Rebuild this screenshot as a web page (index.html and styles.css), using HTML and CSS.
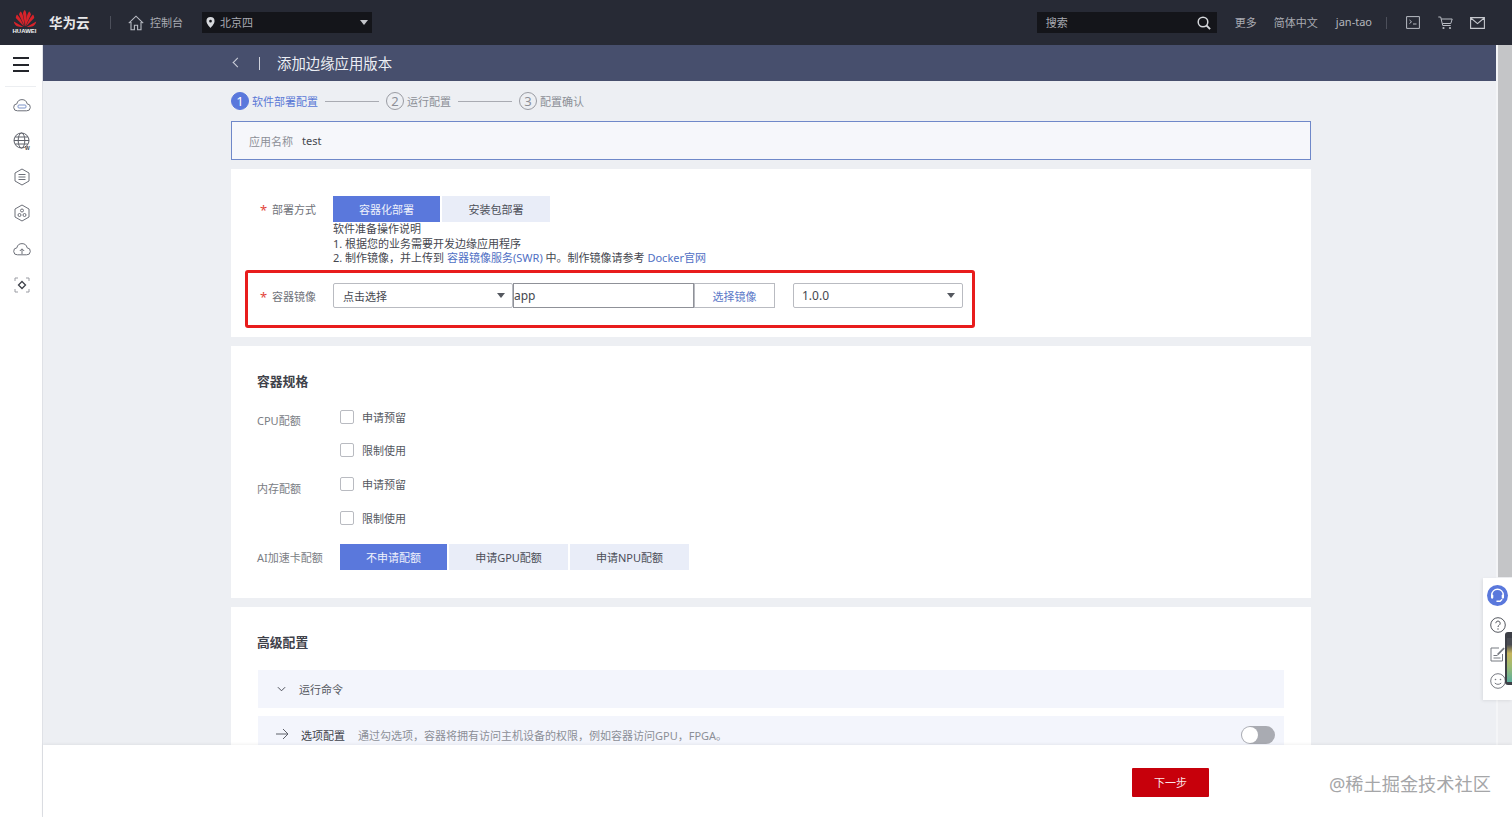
FILE: index.html
```html
<!DOCTYPE html>
<html lang="zh-CN">
<head>
<meta charset="utf-8">
<title>添加边缘应用版本</title>
<link rel="stylesheet" href="styles.css">
</head>
<body>
<header class="topbar">
  <div class="logo">
    <svg class="logo-mark" viewBox="0 0 24 17" width="24" height="17">
      <g fill="#d8232a">
        <path d="M12 16.5 9.6 3.6C9.8 1.8 10.8.6 11.4 0c.9 1.2 2.9 4 .6 16.5Z" transform="translate(.4)"/>
        <path d="M11.6 16.5 6 4.6c.2-1.4 1-2.6 1.8-3.2 1 1 3 4 3.8 15.1Z"/>
        <path d="M12.4 16.5 18 4.6c-.2-1.4-1-2.6-1.8-3.2-1 1-3 4-3.8 15.1Z"/>
        <path d="M11 16.6 2.8 8c0-1.6.5-2.9 1.2-3.6 1.6 1.6 4.6 5.6 7 12.2Z"/>
        <path d="M13 16.6 21.2 8c0-1.6-.5-2.9-1.2-3.6-1.6 1.6-4.6 5.6-7 12.2Z"/>
        <path d="M10.4 17 .8 11.6c.2 2 1.6 4 3.4 4.6 2 .7 4.4.9 6.2.8Z"/>
        <path d="M13.6 17l9.6-5.4c-.2 2-1.6 4-3.4 4.6-2 .7-4.4.9-6.2.8Z"/>
      </g>
    </svg>
    <span class="logo-word">HUAWEI</span>
  </div>
  <span class="brand">华为云</span>
  <span class="bar-sep"></span>
  <svg class="home-icon" viewBox="0 0 16 16" width="16" height="16"><path d="M.8 8.2 8 1.2l7.2 7M3 7v7.8h3.4v-4.6h3.2v4.6H13V7" fill="none" stroke="#b9bcc4" stroke-width="1.1"/></svg>
  <span class="nav-text console">控制台</span>
  <div class="region">
    <svg viewBox="0 0 10 12" width="9" height="11"><path fill-rule="evenodd" d="M5 0a4.5 4.5 0 0 1 4.5 4.5C9.500 7.500 5 12 5 12S.5 7.500.5 4.500A4.500 4.500 0 0 1 5 0Zm0 3a1.500 1.500 0 1 0 0 3 1.500 1.500 0 0 0 0-3Z" fill="#d5d7db"/></svg>
    <span class="region-name">北京四</span>
    <span class="caret caret-light"></span>
  </div>
  <div class="bar-right">
    <div class="search">
      <span>搜索</span>
      <svg viewBox="0 0 14 14" width="14" height="14"><circle cx="6" cy="6" r="4.800" fill="none" stroke="#d5d7db" stroke-width="1.500"/><path d="m9.500 9.500 3.600 3.600" stroke="#d5d7db" stroke-width="1.800"/></svg>
    </div>
    <span class="nav-text more">更多</span>
    <span class="nav-text lang">简体中文</span>
    <span class="nav-text user">jan-tao</span>
    <span class="bar-sep thin"></span>
    <svg class="bar-icon first" viewBox="0 0 14 13" width="14" height="13"><path d="M.6.6h12.800v11.800H.6z" fill="none" stroke="#b9bcc4"/><path d="m3.500 4 2 1.800-2 1.800M7 8h3.500" fill="none" stroke="#b9bcc4"/></svg>
    <svg class="bar-icon cart" viewBox="0 0 15 14" width="15" height="14"><path d="M.3 1h2.400l2 8.500h8M3.200 3h11l-1.400 4.500H4.400" fill="none" stroke="#b9bcc4"/><circle cx="5.500" cy="12" r="1.100" fill="#b9bcc4"/><circle cx="12" cy="12" r="1.100" fill="#b9bcc4"/></svg>
    <svg class="bar-icon mail" viewBox="0 0 15 12" width="15" height="12"><path d="M.6.6h13.800v10.800H.6zM.8 1l6.700 5.600L14.200 1" fill="none" stroke="#c6c8ce" stroke-width="1.100"/></svg>
  </div>
</header>

<div class="shell">
  <aside class="sidebar">
    <div class="hamburger"><i></i><i></i><i></i></div>
    <div class="side-rule"></div>
    <svg class="side-icon" viewBox="0 0 18 14" width="18" height="14"><path d="M4.500 12.800h9a3.500 3.500 0 0 0 .6-7 5.200 5.200 0 0 0-10.200 0 3.500 3.500 0 0 0 .6 7Z" fill="none" stroke="#6d7079"/><rect x="5" y="7" width="8" height="3" rx="1" fill="none" stroke="#7d93c9"/></svg>
    <svg class="side-icon" viewBox="0 0 18 18" width="18" height="18"><g fill="none" stroke="#5d6069"><circle cx="8.500" cy="8.500" r="7.500"/><ellipse cx="8.500" cy="8.500" rx="3.300" ry="7.500"/><path d="M1 8.500h15M2 5h13M2 12h13"/></g><text x="12" y="17.500" class="mini-w">W</text></svg>
    <svg class="side-icon" viewBox="0 0 18 18" width="18" height="18"><g fill="none" stroke="#6d7079"><path d="M9 1 16 5v8l-7 4-7-4V5z"/><path d="M5.500 6.500h7M5.500 9h7M5.500 11.500h7"/></g></svg>
    <svg class="side-icon" viewBox="0 0 18 18" width="18" height="18"><g fill="none" stroke="#6d7079"><path d="M9 1 16 5v8l-7 4-7-4V5z"/><circle cx="9" cy="6.500" r="1.500"/><circle cx="6.500" cy="11" r="1.500"/><circle cx="11.500" cy="11" r="1.500"/></g></svg>
    <svg class="side-icon" viewBox="0 0 18 14" width="18" height="14"><path d="M4.500 12.800h9a3.500 3.500 0 0 0 .6-7 5.200 5.200 0 0 0-10.200 0 3.500 3.500 0 0 0 .6 7Z" fill="none" stroke="#6d7079"/><path d="M9 12V7M6.800 9 9 6.800 11.200 9" fill="none" stroke="#6d7079"/></svg>
    <svg class="side-icon" viewBox="0 0 16 16" width="16" height="16"><path d="M1 4V1h3M12 1h3v3M15 12v3h-3M4 15H1v-3" fill="none" stroke="#9a9ca3"/><path d="M8 4.500 11.500 8 8 11.500 4.500 8z" fill="none" stroke="#3f424a" stroke-width="1.300"/></svg>
  </aside>

  <div class="workspace">
    <div class="upper">
      <main class="main">
        <div class="band">
          <span class="back"></span>
          <span class="band-sep"></span>
          <h1>添加边缘应用版本</h1>
        </div>
        <div class="column">
          <ol class="steps">
            <li class="step active"><span class="num">1</span>软件部署配置</li>
            <li class="line"></li>
            <li class="step"><span class="num">2</span>运行配置</li>
            <li class="line"></li>
            <li class="step"><span class="num">3</span>配置确认</li>
          </ol>

          <div class="info"><span class="info-label">应用名称</span><span class="info-value">test</span></div>

          <section class="card card-deploy">
            <div class="deploy-row">
              <span class="field-label"><b>*</b>部署方式</span>
              <div class="tabs">
                <span class="tab tab-on tab-a">容器化部署</span>
                <span class="tab tab-b">安装包部署</span>
              </div>
            </div>
            <div class="notes">
              <p>软件准备操作说明</p>
              <p>1. 根据您的业务需要开发边缘应用程序</p>
              <p>2. 制作镜像，并上传到 <a>容器镜像服务(SWR)</a> 中。制作镜像请参考 <a>Docker官网</a></p>
            </div>
            <div class="image-row">
              <span class="field-label"><b>*</b>容器镜像</span>
              <div class="box select-a">点击选择<span class="caret"></span></div>
              <div class="box input-a">app</div>
              <div class="box pick">选择镜像</div>
              <div class="box select-b">1.0.0<span class="caret"></span></div>
            </div>
          </section>

          <section class="card card-spec">
            <h2>容器规格</h2>
            <div class="spec-grid">
              <span class="spec-label label-cpu">CPU配额</span>
              <div class="checks">
                <label class="check"><i></i>申请预留</label>
                <label class="check"><i></i>限制使用</label>
              </div>
              <span class="spec-label label-mem">内存配额</span>
              <div class="checks">
                <label class="check"><i></i>申请预留</label>
                <label class="check"><i></i>限制使用</label>
              </div>
              <span class="spec-label label-ai">AI加速卡配额</span>
              <div class="tabs">
                <span class="tab tab-on tab-c">不申请配额</span>
                <span class="tab tab-d">申请GPU配额</span>
                <span class="tab tab-d">申请NPU配额</span>
              </div>
            </div>
          </section>

          <section class="card card-adv">
            <h2>高级配置</h2>
            <div class="adv-row">
              <svg viewBox="0 0 10 6" width="9" height="6"><path d="m1 1 4 4 4-4" fill="none" stroke="#4a4d57" stroke-width="1.100"/></svg>
              <span class="adv-title">运行命令</span>
            </div>
            <div class="adv-row second">
              <svg viewBox="0 0 13 12" width="13" height="12"><path d="M0 6h12M7 1l5 5-5 5" fill="none" stroke="#5d6069"/></svg>
              <span class="adv-title dark">选项配置</span>
              <span class="adv-note">通过勾选项，容器将拥有访问主机设备的权限，例如容器访问GPU，FPGA。</span>
              <span class="toggle"><i></i></span>
            </div>
          </section>
        </div>
      </main>
      <div class="scrollbar"><div class="thumb"></div></div>
    </div>
    <footer class="footer">
      <button class="next">下一步</button>
      <span class="watermark">@稀土掘金技术社区</span>
    </footer>
  </div>
</div>

<aside class="float">
  <span class="float-head">
    <svg viewBox="0 0 20 20" width="21" height="21"><circle cx="10" cy="10" r="10" fill="#5a78dc"/><path d="M4.500 11V9.500a5.500 5.500 0 0 1 11 0V11M9 15.500h3.500l2-2" fill="none" stroke="#fff" stroke-width="1.300"/><rect x="3.800" y="9" width="2.200" height="4" rx="1" fill="#fff"/><rect x="14" y="9" width="2.200" height="4" rx="1" fill="#fff"/></svg>
  </span>
  <svg class="float-icon" viewBox="0 0 16 16" width="16" height="16"><circle cx="8" cy="8" r="7.300" fill="none" stroke="#55585f"/><path d="M5.800 6.200a2.200 2.200 0 1 1 3.400 1.900c-.8.500-1.200.9-1.200 1.900" fill="none" stroke="#55585f"/><circle cx="8" cy="12" r=".7" fill="#55585f"/></svg>
  <svg class="float-icon" viewBox="0 0 16 16" width="16" height="16"><path d="M12.500 8v7H1V2h8M3.500 9.500h4M3.500 12h7" fill="none" stroke="#777a81"/><path d="m7 8 6.500-6.500 1.200 1.200L8.200 9.200z" fill="#777a81"/></svg>
  <svg class="float-icon" viewBox="0 0 16 16" width="16" height="16"><circle cx="8" cy="8" r="7.300" fill="none" stroke="#777a81"/><circle cx="5.500" cy="6.500" r=".8" fill="#777a81"/><circle cx="10.500" cy="6.500" r=".8" fill="#777a81"/><path d="M4.800 10c1.800 1.800 4.600 1.800 6.400 0" fill="none" stroke="#777a81"/></svg>
  <div class="meter"><div class="meter-fill"></div></div>
</aside>
</body>
</html>
```

FILE: styles.css
```css
* { box-sizing: border-box; }
html, body { margin: 0; height: 100%; overflow: hidden; }
body {
  width: 1512px;
  height: 817px;
  font-family: "Noto Sans", "Noto Sans CJK SC", sans-serif;
  font-size: 11px;
  color: #4c4f58;
  background: #edeff3;
  display: flex;
  flex-direction: column;
  position: relative;
}
h1, h2, p, ol { margin: 0; padding: 0; }
ol { list-style: none; }

/* top bar */
.topbar {
  height: 45px;
  flex: none;
  background: #272a35;
  display: flex;
  align-items: center;
  padding-left: 12px;
  color: #c4c6cb;
}
.logo { width: 25px; display: flex; flex-direction: column; align-items: center; }
.logo-mark { display: block; }
.logo-word { font: 700 6px/7px "Liberation Sans", sans-serif; color: #f2f2f2; margin-top: 1px; white-space: nowrap; }
.brand { margin-left: 12px; font-size: 13.500px; font-weight: 700; color: #e8e8ea; width: 41px; white-space: nowrap; margin-bottom: 2px; }
.bar-sep { width: 1px; height: 13px; background: #4c4f5a; margin-left: 20px; }
.home-icon { margin-left: 17px; }
.nav-text { font-size: 11px; color: #a9abb2; white-space: nowrap; margin-bottom: 1px; }
.console { margin-left: 6px; }
.region {
  margin-left: 19px;
  width: 170px;
  height: 21px;
  background: #14151a;
  display: flex;
  align-items: center;
  padding: 0 3px 0 4px;
  color: #a9abb2;
}
.region-name { margin-left: 5px; flex: 1; margin-bottom: 2px; }
.caret { width: 0; height: 0; border: 4px solid transparent; border-top: 5px solid #55585f; border-bottom: 0; }
.caret-light { border-top-color: #c4c6cb; margin-right: 1px; }
.bar-right { margin-left: auto; display: flex; align-items: center; }
.search {
  width: 180px;
  height: 21px;
  background: #14151a;
  display: flex;
  align-items: center;
  justify-content: space-between;
  padding: 0 6px 0 9px;
  color: #a9abb2;
}
.search span { margin-bottom: 1px; }
.more { margin-left: 18px; width: 22px; }
.lang { margin-left: 17px; }
.user { margin-left: 18px; margin-bottom: 2px; color: #b4b6bc; }
.bar-sep.thin { margin-left: 14px; height: 12px; }
.bar-icon.first { margin-left: 19px; }
.bar-icon.cart { margin-left: 18px; }
.bar-icon.mail { margin-left: 17px; margin-right: 27px; }

/* shell */
.shell { flex: 1; min-height: 0; display: flex; }
.sidebar {
  width: 43px;
  flex: none;
  background: #fff;
  border-right: 1px solid #dfe1e6;
  display: flex;
  flex-direction: column;
  align-items: center;
  padding-right: 1px;
}
.hamburger { margin-top: 12px; width: 16px; height: 15px; display: flex; flex-direction: column; justify-content: space-between; }
.hamburger i { display: block; height: 2px; background: #23252b; }
.side-rule { width: 31px; height: 1px; background: #eceef1; margin-top: 14px; margin-bottom: 11px; }
.side-icon { flex: none; margin-bottom: 18px; margin-left: 2px; }
.side-icon:nth-of-type(1) { margin-bottom: 20px; }
.side-icon:nth-of-type(4) { margin-bottom: 20px; }
.side-icon:nth-of-type(5) { margin-bottom: 21px; }
.mini-w { font: 700 5px "Liberation Sans", sans-serif; fill: #3f424a; }

.workspace { flex: 1; min-width: 0; display: flex; flex-direction: column; }
.upper { flex: 1; min-height: 0; display: flex; }
.main { flex: 1; min-width: 0; overflow: hidden; }

.band {
  height: 36px;
  background: #474f6d;
  display: flex;
  align-items: center;
  padding-left: 188px;
  color: #eceef4;
}
.back { width: 7px; height: 7px; border-left: 1px solid #cfd2dc; border-bottom: 1px solid #cfd2dc; transform: rotate(45deg); margin-left: 3px; margin-bottom: 2px; }
.band-sep { width: 1px; height: 13px; background: #cfd2dc; margin-left: 18px; }
.band h1 { font-size: 14.400px; font-weight: 400; margin-left: 17px; line-height: 20px; margin-top: 1px; }

.column { width: 1080px; margin-left: 188px; }

.steps { display: flex; align-items: center; height: 20px; margin-top: 10px; }
.step { display: flex; align-items: center; font-size: 11px; color: #8c8f97; white-space: nowrap; }
.step .num {
  width: 18px;
  height: 18px;
  border: 1px solid #9a9ca3;
  border-radius: 50%;
  display: flex;
  align-items: center;
  justify-content: center;
  font-size: 13px;
  margin-right: 3px;
}
.step.active { color: #5a78d6; }
.step.active .num { background: #5a78dc; border-color: #5a78dc; color: #fff; }
.line { width: 54px; height: 1px; background: #a9abb2; margin: 0 7px; }

.info {
  height: 39px;
  margin-top: 10px;
  border: 1px solid #6f88c9;
  background: #f6f7fb;
  display: flex;
  align-items: center;
  padding-left: 17px;
}
.info-label { color: #8c8f97; }
.info-value { margin-left: 9px; color: #45474f; }

.card { background: #fff; margin-top: 9px; }
.card h2 { font-size: 12.800px; font-weight: 700; color: #3f424a; line-height: 18px; }

.card-deploy { height: 168px; padding: 27px 0 0 14px; }
.deploy-row { display: flex; padding-left: 15px; }
.field-label { width: 73px; height: 26px; display: flex; align-items: center; color: #6f7279; flex: none; white-space: nowrap; }
.field-label b { font-weight: 400; color: #e2453a; font-size: 13px; margin-right: 4px; width: 8px; position: relative; top: 1px; }
.tabs { display: flex; gap: 2px; }
.tab {
  height: 26px;
  display: flex;
  align-items: center;
  justify-content: center;
  background: #e9edf8;
  color: #4c4f58;
  white-space: nowrap;
}
.tab-on { background: #5a78dc; color: #eef1fb; }
.tab-a { width: 107px; }
.tab-b { width: 108px; }
.tab-c { width: 107px; }
.tab-d { width: 119px; }

.notes { margin-left: 88px; color: #45474f; line-height: 14.500px; white-space: nowrap; }
.notes a { color: #4f6fc4; }

.image-row {
  width: 730px;
  height: 58px;
  margin-top: 4.500px;
  border: 3px solid #e81c1c;
  border-radius: 3px;
  display: flex;
  align-items: flex-start;
  padding: 10px 0 0 12px;
}
.image-row .field-label { height: 25px; width: 73px; }
.box {
  height: 25px;
  border: 1px solid #b9bbc1;
  border-radius: 2px;
  background: #fff;
  display: flex;
  align-items: center;
  flex: none;
  color: #45474f;
  white-space: nowrap;
}
.box .caret { margin-left: auto; margin-right: 7px; }
.select-a { width: 180px; padding-left: 9px; }
.input-a { width: 181px; border-color: #8f9198; border-radius: 0; font-size: 12px; }
.pick { width: 81px; justify-content: center; color: #5a78c8; border-radius: 0; }
.select-b { width: 170px; padding-left: 8px; margin-left: 18px; font-size: 12px; }

.card-spec { height: 252px; padding: 26px 0 0 26px; }
.spec-grid { display: grid; grid-template-columns: 83px auto; margin-top: 10px; justify-content: start; }
.spec-label { color: #7a7d84; white-space: nowrap; }
.label-cpu { padding-top: 12px; }
.label-mem { padding-top: 13px; }
.label-ai { display: flex; align-items: center; padding-top: 9px; }
.checks { display: flex; flex-direction: column; }
.check { height: 33.667px; display: flex; align-items: center; color: #55585f; white-space: nowrap; }
.check i { width: 14px; height: 14px; border: 1px solid #b9bbc1; border-radius: 2px; margin-right: 8px; background: #fff; }
.checks + .spec-label + .tabs { margin-top: 9px; }

.card-adv { height: 300px; padding: 26px 27px 0 26px; }
.adv-row {
  height: 38px;
  margin-top: 19px;
  margin-left: 1px;
  background: #f3f5fc;
  display: flex;
  align-items: center;
  padding-left: 18px;
}
.adv-row.second { margin-top: 8px; padding-right: 9px; }
.adv-row svg { margin-left: 1px; }
.adv-row.second svg { margin-left: 0; margin-bottom: 3px; }
.adv-title { margin-left: 13px; margin-bottom: 1px; color: #55585f; white-space: nowrap; }
.adv-title.dark { color: #3f424a; }
.adv-row.second .adv-title { margin-left: 12px; margin-bottom: 0; }
.adv-note { margin-left: 13px; color: #8c8f97; white-space: nowrap; }
.toggle { margin-left: auto; width: 34px; height: 18px; border-radius: 9px; background: #a9abb2; padding: 1px; }
.toggle i { display: block; width: 16px; height: 16px; border-radius: 50%; background: #fff; }

.scrollbar { width: 16px; flex: none; background: #edeef1; border-left: 2px solid #f4f5f7; }
.thumb { height: 532px; background: #c4c5c7; }

.footer {
  height: 72px;
  flex: none;
  background: #fff;
  display: flex;
  align-items: center;
  position: relative;
  z-index: 1;
  box-shadow: 0 -1px 3px rgba(0,0,0,.06);
}
.next {
  margin-left: 1089px;
  width: 77px;
  height: 29px;
  border: 0;
  border-radius: 1px;
  background: #c7000b;
  color: #fbe6e8;
  font: 11px "Noto Sans", "Noto Sans CJK SC", sans-serif;
  position: relative;
  top: 1px;
}
.watermark { margin-left: 120px; font-size: 18.200px; color: #a5a6a8; white-space: nowrap; position: relative; top: 2px; }

/* floating help panel */
.float {
  position: absolute;
  left: 1483px;
  top: 578px;
  width: 29px;
  height: 122px;
  background: #fff;
  box-shadow: -1px 1px 3px rgba(0,0,0,.08);
  display: flex;
  flex-direction: column;
  align-items: center;
  padding: 7px 0 0 0;
  overflow: hidden;
  z-index: 2;
}
.float-head { display: block; height: 21px; }
.float-icon { flex: none; margin-top: 11px; }
.float-icon:nth-of-type(2) { margin-top: 13px; }
.meter {
  position: absolute;
  left: 22px;
  top: 54px;
  width: 10px;
  height: 53px;
  border-radius: 3px 0 0 3px;
  background: #3d3f46;
  padding: 6px 0 3px 2px;
}
.meter-fill { height: 100%; background: linear-gradient(#4a4c52 0 15%, #c6b45c 35%, #9dbb73 65%, #5cae9d 100%); }
```
